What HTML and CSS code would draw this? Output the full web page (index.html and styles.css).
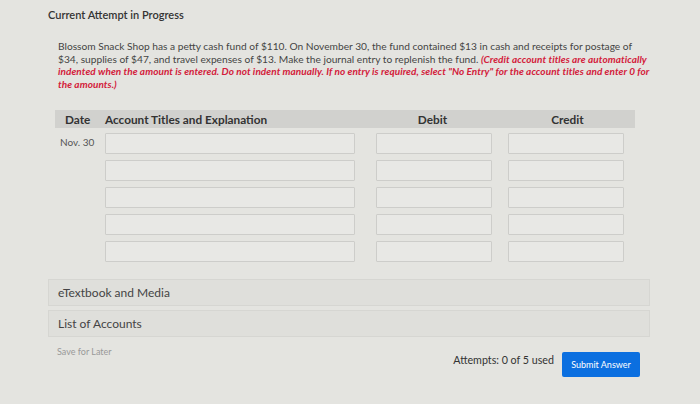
FILE: index.html
```html
<!DOCTYPE html>
<html lang="en">
<head>
    <meta charset="UTF-8">
    <title>Current Attempt in Progress</title>
    <link rel="stylesheet" href="styles.css">
</head>
<body>
    <div class="page">
        <h2 class="attempt-title">Current Attempt in Progress</h2>
        <p class="question">
            Blossom Snack Shop has a petty cash fund of $110. On November 30, the fund contained $13 in cash and receipts for postage of $34, supplies of $47, and travel expenses of $13. Make the journal entry to replenish the fund.
            <em class="note">(Credit account titles are automatically indented when the amount is entered. Do not indent manually. If no entry is required, select "No Entry" for the account titles and enter 0 for the amounts.)</em>
        </p>

        <div class="journal">
            <div class="journal-head">
                <span class="col-date">Date</span>
                <span class="col-account">Account Titles and Explanation</span>
                <span class="col-debit">Debit</span>
                <span class="col-credit">Credit</span>
            </div>
            <div class="journal-row">
                <span class="col-date date-label">Nov. 30</span>
                <span class="col-account"><input class="cell"></span>
                <span class="col-debit"><input class="cell"></span>
                <span class="col-credit"><input class="cell"></span>
            </div>
            <div class="journal-row">
                <span class="col-date"></span>
                <span class="col-account"><input class="cell"></span>
                <span class="col-debit"><input class="cell"></span>
                <span class="col-credit"><input class="cell"></span>
            </div>
            <div class="journal-row">
                <span class="col-date"></span>
                <span class="col-account"><input class="cell"></span>
                <span class="col-debit"><input class="cell"></span>
                <span class="col-credit"><input class="cell"></span>
            </div>
            <div class="journal-row">
                <span class="col-date"></span>
                <span class="col-account"><input class="cell"></span>
                <span class="col-debit"><input class="cell"></span>
                <span class="col-credit"><input class="cell"></span>
            </div>
            <div class="journal-row">
                <span class="col-date"></span>
                <span class="col-account"><input class="cell"></span>
                <span class="col-debit"><input class="cell"></span>
                <span class="col-credit"><input class="cell"></span>
            </div>
        </div>

        <div class="panel">eTextbook and Media</div>
        <div class="panel">List of Accounts</div>

        <div class="footer">
            <span class="save">Save for Later</span>
            <span class="attempts">Attempts: 0 of 5 used</span>
            <button class="submit">Submit Answer</button>
        </div>
    </div>
</body>
</html>
```

FILE: styles.css
```css
html, body{
    margin: 0;
    background-color: #e4e4e0;
}
body{
    font-family: Lato, "Open Sans", sans-serif;
    color: #3a3a3a;
    width: 700px;
    height: 404px;
    overflow: hidden;
}
.page{
    padding: 8px 50px 0 48px;
}
.attempt-title{
    margin: 0;
    font-size: 11px;
    font-weight: 600;
    color: #333;
    line-height: 14px;
}
.question{
    margin: 18px 0 0 10px;
    font-size: 10.2px;
    line-height: 12.5px;
    color: #444;
    width: 594px;
}
.note{
    color: #d3203a;
    font-weight: 700;
    font-size: 10px;
    letter-spacing: 0.06px;
}
.journal{
    margin: 20px 0 0 7px;
    width: 580px;
}
.journal-head{
    display: flex;
    background-color: #d1d1ce;
    height: 18px;
    align-items: center;
    font-size: 11.8px;
    font-weight: 700;
    color: #333;
}
.col-date{
    width: 45px;
    padding-left: 10px;
    box-sizing: border-box;
}
.col-account{
    width: 265px;
    padding-left: 5px;
    box-sizing: border-box;
}
.col-debit{
    width: 135px;
    padding-left: 11px;
    box-sizing: border-box;
}
.col-credit{
    width: 135px;
    padding-left: 8px;
    box-sizing: border-box;
}
.journal-head .col-debit,
.journal-head .col-credit{
    text-align: center;
    padding-left: 0;
}
.journal-row{
    display: flex;
    margin-top: 5px;
}
.journal-row + .journal-row{
    margin-top: 6px;
}
.date-label{
    font-size: 10px;
    color: #555;
    padding-left: 5px;
    padding-top: 3px;
}
.cell{
    display: block;
    width: 100%;
    height: 21px;
    box-sizing: border-box;
    border: 1px solid #cdcdca;
    background-color: #e8e8e5;
    border-radius: 1px;
}
.col-account .cell{
    width: 250px;
}
.col-debit .cell,
.col-credit .cell{
    width: 116px;
}
.panel{
    width: 602px;
    box-sizing: border-box;
    border: 1px solid #d6d6d2;
    background-color: #dfdfdb;
    font-size: 12px;
    color: #444;
    padding: 5px 9px;
    height: 27px;
    margin-bottom: 4px;
}
.journal + .panel{
    margin-top: 17px;
}
.footer{
    display: flex;
    align-items: center;
    width: 583px;
    margin-top: 5px;
    padding-left: 9px;
}
.save{
    font-size: 9px;
    color: #999;
    align-self: flex-start;
    margin-top: 4px;
}
.attempts{
    margin-left: auto;
    font-size: 10.7px;
    color: #333;
    margin-right: 8px;
}
.submit{
    font-family: Lato, sans-serif;
    background-color: #0b6fe0;
    color: #fff;
    border: none;
    border-radius: 2px;
    font-size: 9px;
    height: 25px;
    width: 78px;
    margin-top: 10px;
}
```
